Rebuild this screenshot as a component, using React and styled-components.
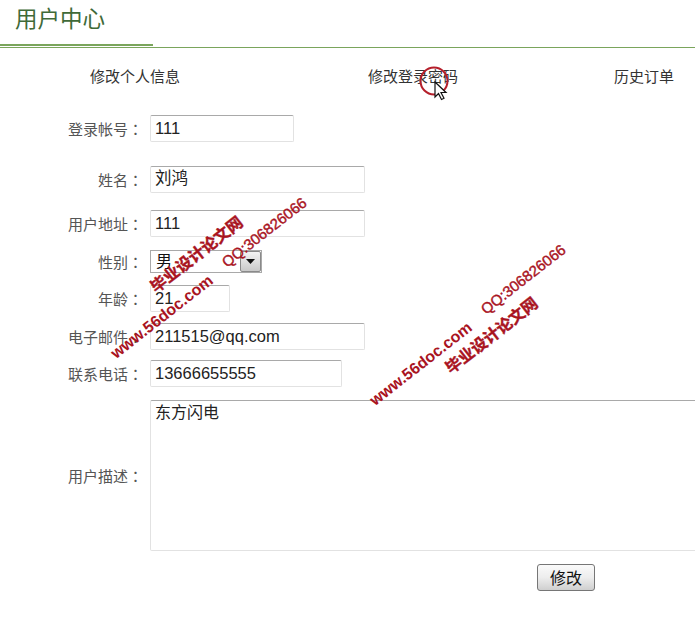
import React from "react";
import styled, { createGlobalStyle } from "styled-components";

const CJK = '"Liberation Sans", "Noto Sans CJK SC", sans-serif';

const GlobalStyle = createGlobalStyle`
  html, body {
    margin: 0;
    padding: 0;
    background: #fff;
    overflow: hidden;
  }
`;

const Page = styled.div`
  position: relative;
  width: 695px;
  height: 618px;
  overflow: hidden;
  font-family: ${CJK};
`;

const Header = styled.div`
  height: 47px;
  border-bottom: 1px solid #7aa55c;
`;

const TitleTab = styled.div`
  width: 138px;
  height: 44px;
  padding-left: 15px;
  border-bottom: 2px solid #7aa55c;
  font-size: 22.5px;
  line-height: 40px;
  white-space: nowrap;
  color: #3f6a38;
`;

const Nav = styled.div`
  display: grid;
  grid-template-columns: 278px 246px auto;
  padding: 19px 0 0 90px;
  font-size: 15px;
  line-height: 20px;
  color: #333;
`;

const Form = styled.div`
  display: flex;
  flex-direction: column;
`;

const Row = styled.div`
  display: flex;
  align-items: center;
  margin-top: ${(props) => props.$top}px;
`;

const Label = styled.div`
  flex: none;
  width: 143px;
  margin-right: 7px;
  padding-bottom: 1px;
  text-align: right;
  font-size: 15px;
  color: #555;
  white-space: nowrap;
`;

const Colon = styled.span`
  font-family: "Noto Sans CJK TC", sans-serif;
`;

const Field = styled.input`
  box-sizing: border-box;
  width: ${(props) => props.$width}px;
  height: 27px;
  padding: 0 4px ${(props) => (props.$raised ? 5 : 0)}px;
  border: 1px solid #e2e2e2;
  border-top-color: #a9a9a9;
  border-radius: 2px;
  outline: none;
  background: #fff;
  font-family: ${CJK};
  font-size: 16.5px;
  color: #222;
`;

const SelectBox = styled.div`
  position: relative;
  width: 112px;
  height: 23px;
`;

const Select = styled.select`
  box-sizing: border-box;
  width: 100%;
  height: 100%;
  padding: 0 5px;
  border: 1px solid #a9a9a9;
  border-radius: 0;
  appearance: none;
  background: #fff;
  font-family: ${CJK};
  font-size: 16px;
  color: #111;
`;

const SelectArrow = styled.div`
  position: absolute;
  top: 1px;
  right: 1px;
  display: flex;
  align-items: center;
  justify-content: center;
  box-sizing: border-box;
  width: 21px;
  height: 21px;
  border: 1px solid #8a8a8a;
  border-radius: 2px;
  background: linear-gradient(#f4f4f4, #c9c9c9);
`;

const Memo = styled.textarea`
  box-sizing: border-box;
  flex: none;
  width: 600px;
  height: 151px;
  padding: 2px 4px;
  border: 1px solid #e2e2e2;
  border-top-color: #a9a9a9;
  border-radius: 2px;
  outline: none;
  resize: none;
  font-family: ${CJK};
  font-size: 16px;
  line-height: 20px;
  color: #222;
`;

const SubmitRow = styled.div`
  margin: 13px 0 0 537px;
`;

const Submit = styled.button`
  box-sizing: border-box;
  width: 58px;
  height: 27px;
  padding: 0 0 7px;
  border: 1px solid #767676;
  border-radius: 3px;
  background: linear-gradient(#fafafa 0%, #ededed 50%, #cfcfcf 100%);
  font-family: ${CJK};
  font-size: 16px;
  color: #111;
`;

const Watermark = styled.div`
  position: absolute;
  left: ${(props) => props.$x}px;
  top: ${(props) => props.$y}px;
  transform: translate(-50%, -50%) rotate(-38deg);
  font-size: ${(props) => props.$size}px;
  font-weight: 700;
  line-height: 1;
  color: #a9141f;
  white-space: nowrap;
  -webkit-text-stroke: ${(props) => props.$stroke}px #a9141f;
`;

const QqMark = styled(Watermark)`
  font-weight: 400;
`;

const CursorMark = styled.svg`
  position: absolute;
  left: 418px;
  top: 64px;
`;

function Stamp({ www, cn, qq }) {
  return (
    <>
      <Watermark $x={www[0]} $y={www[1]} $size={16} $stroke={0}>
        www.56doc.com
      </Watermark>
      <Watermark $x={cn[0]} $y={cn[1]} $size={16} $stroke={0.4}>
        毕业设计论文网
      </Watermark>
      <QqMark $x={qq[0]} $y={qq[1]} $size={15} $stroke={0.4}>
        QQ:306826066
      </QqMark>
    </>
  );
}

export default function App() {
  return (
    <Page>
      <GlobalStyle />
      <Header>
        <TitleTab>用户中心</TitleTab>
      </Header>
      <Nav>
        <span>修改个人信息</span>
        <span>修改登录密码</span>
        <span>历史订单</span>
      </Nav>
      <Form>
        <Row $top={28}>
          <Label>登录帐号<Colon>：</Colon></Label>
          <Field $width={144} value="111" readOnly />
        </Row>
        <Row $top={24}>
          <Label>姓名<Colon>：</Colon></Label>
          <Field $width={215} $raised value="刘鸿" readOnly />
        </Row>
        <Row $top={17}>
          <Label>用户地址<Colon>：</Colon></Label>
          <Field $width={215} value="111" readOnly />
        </Row>
        <Row $top={13}>
          <Label>性别<Colon>：</Colon></Label>
          <SelectBox>
            <Select defaultValue="男">
              <option>男</option>
              <option>女</option>
            </Select>
            <SelectArrow>
              <svg width="9" height="5" viewBox="0 0 9 5">
                <path d="M0 0h9L4.500 5z" fill="#111" />
              </svg>
            </SelectArrow>
          </SelectBox>
        </Row>
        <Row $top={12}>
          <Label>年龄<Colon>：</Colon></Label>
          <Field $width={80} value="21" readOnly />
        </Row>
        <Row $top={11}>
          <Label>电子邮件<Colon>：</Colon></Label>
          <Field $width={215} value="211515@qq.com" readOnly />
        </Row>
        <Row $top={10}>
          <Label>联系电话<Colon>：</Colon></Label>
          <Field $width={192} value="13666655555" readOnly />
        </Row>
        <Row $top={13}>
          <Label>用户描述<Colon>：</Colon></Label>
          <Memo value="东方闪电" readOnly />
        </Row>
      </Form>
      <SubmitRow>
        <Submit>修改</Submit>
      </SubmitRow>
      <Stamp www={[162, 317]} cn={[197, 255]} qq={[264, 232]} />
      <Stamp www={[421, 364]} cn={[492, 336]} qq={[523, 279]} />
      <CursorMark width="32" height="38" viewBox="0 0 32 38">
        <circle cx="16" cy="17" r="13.500" fill="none" stroke="#b51f2b" strokeWidth="2" />
        <path
          d="M17 18v15l3.500-3.500 3 6 2.500-1.200-3-5.800h5z"
          fill="#fff"
          stroke="#111"
          strokeWidth="1.200"
          strokeLinejoin="miter"
        />
      </CursorMark>
    </Page>
  );
}
